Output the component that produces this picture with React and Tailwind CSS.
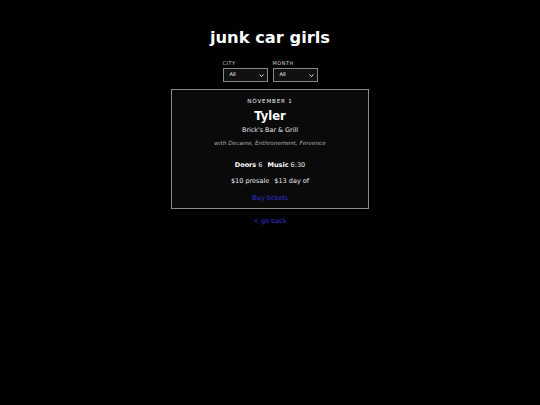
export default function App() {
  return (
    <div className="min-h-[405px] bg-black text-[#e8e8e8] font-['DejaVu_Sans',sans-serif]">
      <div className="flex flex-col items-center pt-[26px]">
        <h1 className="text-[16.3px] font-bold leading-[23px] text-white">junk car girls</h1>
        <div className="mt-[10px] flex gap-[5px]">
          <Filter label="City" />
          <Filter label="Month" />
        </div>
        <div className="mt-[7px] flex w-[198px] flex-col items-center border border-[#8a8a8a] bg-[#0a0a0a] pb-[4px] pt-[6px]">
          <div className="text-[5.6px] uppercase tracking-[0.8px] leading-[10px]">November 1</div>
          <div className="mt-[2px] text-[11.5px] font-bold leading-[16px] text-white">Tyler</div>
          <div className="text-[6.4px] leading-[12px]">Brick's Bar &amp; Grill</div>
          <div className="mt-[1px] text-[5.7px] italic leading-[12px] text-[#b0b0b0]">
            with Decaine, Enthronement, Fervence
          </div>
          <div className="mt-[10px] text-[6.5px] leading-[12px]">
            <b className="text-white">Doors</b> 6 <span className="ml-[3px]"><b className="text-white">Music</b> 6:30</span>
          </div>
          <div className="mt-[4px] text-[6.5px] leading-[12px]">
            $10 presale <span className="ml-[3px]">$13 day of</span>
          </div>
          <a href="#" className="mt-[5px] text-[6.5px] leading-[12px] text-[#3030dc]">Buy tickets</a>
        </div>
        <a href="#" className="mt-[6px] text-[6.5px] leading-[12px] text-[#3030dc]">&lt; go back</a>
      </div>
    </div>
  );
}

function Filter({ label }) {
  return (
    <label className="flex flex-col">
      <span className="text-[5px] uppercase tracking-[0.5px] leading-[8px] text-[#cfcfcf]">{label}</span>
      <span className="relative mt-[1px] flex h-[14px] w-[45px] items-center border border-[#888] bg-[#111] px-[6px] text-[5px] text-white">
        All
        <svg className="absolute right-[3px] top-[5px]" width="5" height="3" viewBox="0 0 5 3">
          <path d="M0.5 0.5 L2.5 2.5 L4.5 0.5" stroke="white" strokeWidth="0.9" fill="none" />
        </svg>
      </span>
    </label>
  );
}
